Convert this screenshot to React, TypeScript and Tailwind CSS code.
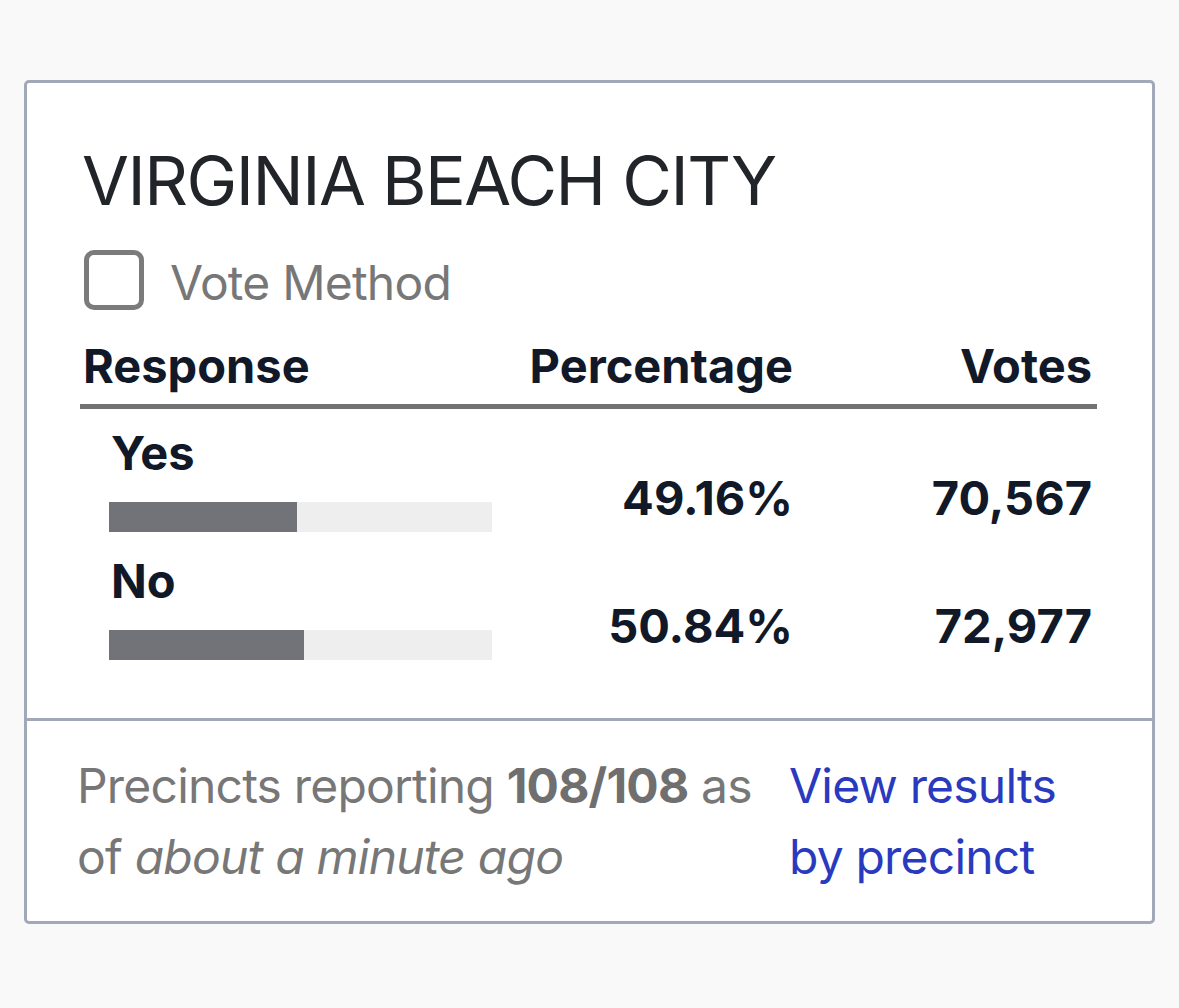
import React from "react";

type Row = { label: string; pct: number; votes: string };

const rows: Row[] = [
  { label: "Yes", pct: 49.16, votes: "70,567" },
  { label: "No", pct: 50.84, votes: "72,977" },
];

export default function App() {
  return (
    <div
      className="min-h-screen w-full bg-[#f9f9f9] pl-[24px] pt-[80px]"
      style={{ fontFamily: "Inter, 'Noto Sans', sans-serif" }}
    >
      <div className="w-[1131px] rounded-[5px] border-[3px] border-[#a1a8b8] bg-white">
        {/* top section */}
        <div className="px-[55px] pt-[63px] pb-[58px]">
          <h2 className="text-[68px] leading-[68px] font-normal tracking-[-1.5px] text-[#212529]">
            VIRGINIA BEACH CITY
          </h2>

          <label className="mt-[36px] flex items-center">
            <span className="ml-[2px] h-[60px] w-[60px] rounded-[10px] border-[5px] border-[#7b7b7b] bg-white" />
            <span className="ml-[26px] mt-[6px] text-[48px] leading-[48px] tracking-[-0.8px] text-[#777777]">
              Vote Method
            </span>
          </label>

          <div className="mt-[32px] w-[1017px] -ml-[2px]">
            <div className="flex pb-[15px] text-[47px] leading-[47px] font-bold text-[#111827]">
              <div className="w-[420px] pl-[3px]">Response</div>
              <div className="w-[293px] text-right">Percentage</div>
              <div className="flex-1 pr-[5px] text-right">Votes</div>
            </div>
            <div className="h-[5px] bg-[#737373]" />

            <div className="mt-[20px] flex flex-col gap-[25px]">
              {rows.map((r) => (
                <div key={r.label} className="flex text-[47px] leading-[47px] font-bold text-[#111827]">
                  <div className="w-[420px] pl-[29px]">
                    <div className="pl-[2px]">{r.label}</div>
                    <div className="mt-[26px] h-[30px] w-[383px] bg-[#eeeeee]">
                      <div className="h-full bg-[#717379]" style={{ width: `${r.pct}%` }} />
                    </div>
                  </div>
                  <div className="w-[293px] pt-[45px] text-right">{r.pct.toFixed(2)}%</div>
                  <div className="flex-1 pt-[45px] pr-[5px] text-right">{r.votes}</div>
                </div>
              ))}
            </div>
          </div>
        </div>

        {/* footer */}
        <div className="flex border-t-[3px] border-[#a1a8b8] pl-[50px] pt-[29px] pb-[29px] text-[48px] leading-[71px] tracking-[-0.8px]">
          <p className="w-[712px] text-[#777777]">
            Precincts reporting <span className="font-bold text-[#6f6f6f]">108/108</span> as
            <br />
            of <em>about a minute ago</em>
          </p>
          <a href="#" className="text-[#2a3abf]">
            View results
            <br />
            by precinct
          </a>
        </div>
      </div>
    </div>
  );
}
